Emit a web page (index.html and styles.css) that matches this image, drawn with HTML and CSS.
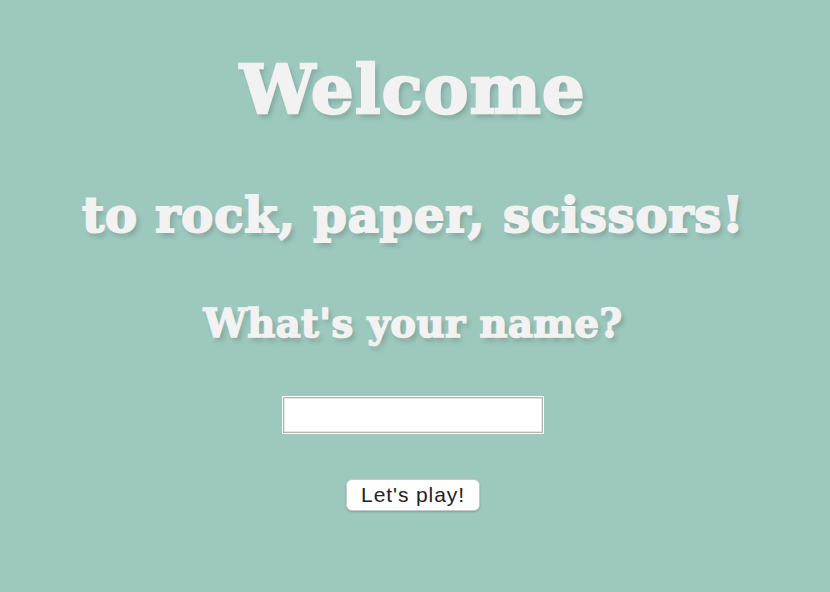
FILE: index.html
```html
<!DOCTYPE html>
<html>
<head>
<meta charset="utf-8">
<link rel="stylesheet" href="styles.css">
</head>
<body>
<main class="page">
  <h1 class="title">Welcome</h1>
  <h2 class="subtitle">to rock, paper, scissors!</h2>
  <h3 class="question">What's your name?</h3>
  <input class="name-input" type="text">
  <button class="play-btn">Let's play!</button>
</main>
</body>
</html>
```
FILE: styles.css
```css
html, body {
  margin: 0;
  padding: 0;
  background: #9dc8be;
  height: 100%;
}
.page {
  display: flex;
  flex-direction: column;
  align-items: center;
  padding-top: 50px;
  padding-right: 4px;
  font-family: "DejaVu Serif", serif;
  color: #f2f2f2;
}
.title, .subtitle, .question {
  margin: 0;
  font-weight: bold;
  text-shadow: 3px 4px 5px rgba(0, 0, 0, 0.18);
  white-space: nowrap;
  -webkit-text-stroke: 1.5px #f2f2f2;
}
.title {
  font-size: 67px;
  line-height: 80px;
  letter-spacing: 1.3px;
  -webkit-text-stroke-width: 2.5px;
}
.subtitle {
  font-size: 48px;
  line-height: 60px;
  margin-top: 55px;
  letter-spacing: 0.8px;
  -webkit-text-stroke-width: 2px;
}
.question {
  font-size: 38.5px;
  line-height: 50px;
  margin-top: 54px;
  letter-spacing: 0.45px;
  -webkit-text-stroke-width: 1.6px;
}
.name-input {
  box-sizing: border-box;
  width: 260px;
  height: 36px;
  margin-top: 48px;
  border: 1px solid #b3b3b3;
  box-shadow: 0 0 0 1px #ffffff, inset 0 0 0 1px #e6e6e6;
  background: #fff;
  padding: 0 6px;
  outline: none;
}
.play-btn {
  margin-top: 46px;
  width: 134px;
  height: 32px;
  background: #fff;
  border: 1px solid #c8c8c8;
  border-radius: 6px;
  box-shadow: 0 1px 2px rgba(0, 0, 0, 0.2);
  font-family: "Liberation Sans", Arial, sans-serif;
  font-size: 21px;
  letter-spacing: 0.9px;
  color: #222;
  padding: 0;
}
```
